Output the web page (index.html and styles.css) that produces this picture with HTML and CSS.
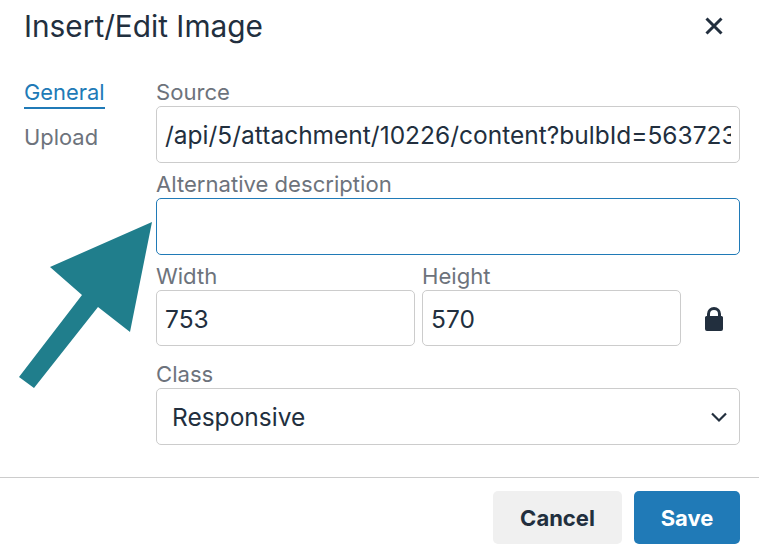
FILE: index.html
```html
<!DOCTYPE html>
<html lang="en">
<head>
    <meta charset="UTF-8">
    <meta name="viewport" content="width=device-width, initial-scale=1.0">
    <title>Insert/Edit Image</title>
    <link rel="stylesheet" href="styles.css">
</head>
<body>
    <div class="dialog">
        <div class="header">
            <h1>Insert/Edit Image</h1>
            <button class="close" type="button" aria-label="Close">
                <svg width="20" height="20" viewBox="0 0 20 20"><path d="M2.5 2.5 17.5 17.5M17.5 2.5 2.5 17.5" fill="none" stroke="#222f3e" stroke-width="3"/></svg>
            </button>
        </div>

        <div class="content">
            <div class="tabs">
                <div class="tab active">General</div>
                <div class="tab">Upload</div>
            </div>

            <form class="form">
                <div class="field">
                    <label for="source">Source</label>
                    <input id="source" type="text" value="/api/5/attachment/10226/content?bulbId=563723">
                </div>
                <div class="field">
                    <label for="alt">Alternative description</label>
                    <input id="alt" class="focused" type="text">
                </div>
                <div class="size-row">
                    <div class="field">
                        <label for="width">Width</label>
                        <input id="width" type="text" value="753">
                    </div>
                    <div class="field">
                        <label for="height">Height</label>
                        <input id="height" type="text" value="570">
                    </div>
                    <div class="lock">
                        <svg width="18" height="25" viewBox="0 0 18 25"><path d="M2 10V8a7 7 0 0 1 14 0v2h.5A1.5 1.5 0 0 1 18 11.5v11.5a2 2 0 0 1-2 2H2a2 2 0 0 1-2-2V11.500A1.500 1.500 0 0 1 1.500 10ZM5 10h8V8a4 4 0 0 0-8 0Z" fill="#222f3e" fill-rule="evenodd"/></svg>
                    </div>
                </div>
                <div class="field class-field">
                    <label for="class">Class</label>
                    <div class="select-wrap">
                        <select id="class">
                            <option>Responsive</option>
                        </select>
                        <svg class="chevron" width="18" height="12" viewBox="0 0 18 12"><path d="M2 2.500 9 9.500 16 2.500" fill="none" stroke="#222f3e" stroke-width="2.200"/></svg>
                    </div>
                </div>
            </form>
        </div>

        <div class="footer">
            <button class="btn btn-cancel" type="button">Cancel</button>
            <button class="btn btn-save" type="button">Save</button>
        </div>

        <!-- annotation drawn over the dialog -->
        <svg class="arrow" width="160" height="400" viewBox="0 0 160 400">
            <polygon points="152,222 50,267 82,295 19,377 34,388 98,307 130,332" fill="#207e8c"/>
        </svg>
    </div>
</body>
</html>
```

FILE: styles.css
```css
* {
    box-sizing: border-box;
}
html, body {
    margin: 0;
    height: 100%;
    background-color: white;
}
body {
    font-family: Inter, 'Noto Sans', sans-serif;
    color: #222f3e;
    overflow: hidden;
}
.dialog {
    position: relative;
    width: 759px;
    height: 548px;
    overflow: hidden;
}
.header {
    display: flex;
    justify-content: space-between;
    align-items: center;
    height: 52px;
    padding: 0 26px 0 24px;
}
h1 {
    margin: 0;
    font-size: 29.8px;
    font-weight: 400;
    line-height: 52px;
}
.close {
    display: flex;
    padding: 0;
    border: 0;
    margin-right: 9px;
    background: none;
}
.content {
    display: flex;
    height: 426px;
    padding: 28px 19px 0 24px;
    border-bottom: 1px solid #ccc;
}
.tabs {
    width: 132px;
    flex-shrink: 0;
}
.tab {
    width: fit-content;
    height: 27px;
    margin-bottom: 18px;
    font-size: 21.9px;
    line-height: 24px;
    color: #6d737c;
}
.tab.active {
    height: 29px;
    margin-bottom: 16px;
    color: #207ab7;
    border-bottom: 2px solid #207ab7;
}
.form {
    flex: 1;
    display: flex;
    flex-direction: column;
    gap: 9px;
}
.field {
    display: flex;
    flex-direction: column;
}
label {
    height: 26px;
    font-size: 22.1px;
    line-height: 24px;
    color: #6d737c;
}
input, select {
    width: 100%;
    height: 57px;
    padding: 1px 8px 0;
    border: 1px solid #ccc;
    border-radius: 5px;
    background-color: white;
    font-family: inherit;
    font-size: 24.5px;
    color: #222f3e;
    outline: none;
}
input.focused {
    border-color: #207ab7;
}
.size-row {
    display: flex;
    gap: 7px;
}
.size-row .field {
    width: 259px;
}
.size-row input {
    height: 56px;
    padding-top: 2px;
}
.lock {
    display: flex;
    align-items: center;
    justify-content: center;
    flex: 1;
    padding-top: 26px;
}
.class-field {
    margin-top: 7px;
}
.select-wrap {
    position: relative;
}
select {
    appearance: none;
    padding: 1px 40px 0 15px;
}
.chevron {
    position: absolute;
    top: 23px;
    right: 12px;
}
.footer {
    display: flex;
    justify-content: flex-end;
    gap: 12px;
    padding: 13px 19px 0 0;
}
.btn {
    height: 53px;
    border: 0;
    border-radius: 5px;
    font-family: inherit;
    font-size: 22px;
    font-weight: 700;
}
.btn-cancel {
    width: 129px;
    background-color: #f0f0f0;
    color: #222f3e;
}
.btn-save {
    width: 106px;
    background-color: #207ab7;
    color: white;
}
.arrow {
    position: absolute;
    top: 0;
    left: 0;
    pointer-events: none;
}
```
